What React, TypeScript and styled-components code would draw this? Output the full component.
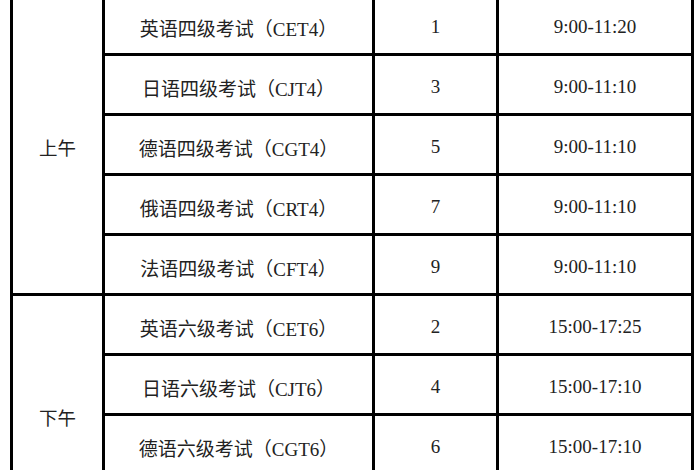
import React from "react";
import styled, { createGlobalStyle } from "styled-components";

const GlobalStyle = createGlobalStyle`
  html, body {
    margin: 0;
    padding: 0;
    background: #ffffff;
    overflow: hidden;
  }
`;

const Page = styled.div`
  width: 700px;
  height: 470px;
  overflow: hidden;
  background: #ffffff;
`;

const Table = styled.table`
  border-collapse: collapse;
  table-layout: fixed;
  width: 684px;
  margin: -7px 0 0 10px;
  font-family: "Liberation Serif", "Noto Sans CJK SC", serif;
  font-size: 19px;
  color: #222222;
`;

const Col = styled.col<{ $w: number }>`
  width: ${(p) => p.$w}px;
`;

const Cell = styled.td`
  border: 3px solid #000000;
  height: 52px;
  padding: 5px 0 0;
  text-align: center;
  vertical-align: middle;
  white-space: nowrap;
`;

const PeriodCell = styled(Cell)`
  font-size: 18.5px;
`;

type Exam = { name: string; code: string; seq: number; time: string };

const morning: Exam[] = [
  { name: "英语四级考试", code: "CET4", seq: 1, time: "9:00-11:20" },
  { name: "日语四级考试", code: "CJT4", seq: 3, time: "9:00-11:10" },
  { name: "德语四级考试", code: "CGT4", seq: 5, time: "9:00-11:10" },
  { name: "俄语四级考试", code: "CRT4", seq: 7, time: "9:00-11:10" },
  { name: "法语四级考试", code: "CFT4", seq: 9, time: "9:00-11:10" },
];

const afternoon: Exam[] = [
  { name: "英语六级考试", code: "CET6", seq: 2, time: "15:00-17:25" },
  { name: "日语六级考试", code: "CJT6", seq: 4, time: "15:00-17:10" },
  { name: "德语六级考试", code: "CGT6", seq: 6, time: "15:00-17:10" },
  { name: "俄语六级考试", code: "CRT6", seq: 8, time: "15:00-17:10" },
];

function Group({ label, exams }: { label: string; exams: Exam[] }) {
  return (
    <>
      {exams.map((e, i) => (
        <tr key={e.code}>
          {i === 0 && <PeriodCell rowSpan={exams.length}>{label}</PeriodCell>}
          <Cell>
            {e.name}（{e.code}）
          </Cell>
          <Cell>{e.seq}</Cell>
          <Cell>{e.time}</Cell>
        </tr>
      ))}
    </>
  );
}

export default function App() {
  return (
    <Page>
      <GlobalStyle />
      <Table>
        <colgroup>
          <Col $w={92} />
          <Col $w={270} />
          <Col $w={124} />
          <Col $w={195} />
        </colgroup>
        <tbody>
          <Group label="上午" exams={morning} />
          <Group label="下午" exams={afternoon} />
        </tbody>
      </Table>
    </Page>
  );
}
